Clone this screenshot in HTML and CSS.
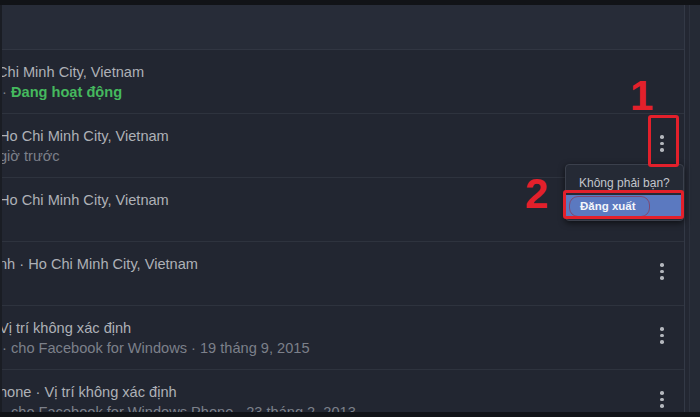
FILE: index.html
```html
<!DOCTYPE html>
<html lang="vi">
<head>
<meta charset="utf-8">
<title>Sessions</title>
<link rel="stylesheet" href="styles.css">
</head>
<body>
<div class="screen">
  <div class="topstrip"></div>
  <div class="frame">
    <div class="main">
      <div class="header"></div>
      <div class="row">
        <div class="info">
          <div class="primary cut3">Chi Minh City, Vietnam</div>
          <div class="secondary"><span class="dot">·</span><span class="active">Đang hoạt động</span></div>
        </div>
      </div>
      <div class="row">
        <div class="info">
          <div class="primary">Ho Chi Minh City, Vietnam</div>
          <div class="secondary">giờ trước</div>
        </div>
        <div class="kebab"><i></i><i></i><i></i></div>
      </div>
      <div class="row">
        <div class="info">
          <div class="primary">Ho Chi Minh City, Vietnam</div>
        </div>
        <div class="kebab"><i></i><i></i><i></i></div>
      </div>
      <div class="row">
        <div class="info">
          <div class="primary">nh · Ho Chi Minh City, Vietnam</div>
        </div>
        <div class="kebab"><i></i><i></i><i></i></div>
      </div>
      <div class="row">
        <div class="info">
          <div class="primary">Vị trí không xác định</div>
          <div class="secondary"><span class="dot">·</span>cho Facebook for Windows · 19 tháng 9, 2015</div>
        </div>
        <div class="kebab"><i></i><i></i><i></i></div>
      </div>
      <div class="row">
        <div class="info">
          <div class="primary">hone · Vị trí không xác định</div>
          <div class="secondary"><span class="dot">·</span>cho Facebook for Windows Phone · 23 tháng 2, 2013</div>
        </div>
        <div class="kebab"><i></i><i></i><i></i></div>
      </div>
    </div>
    <div class="gutter"></div>
  </div>
  <div class="bottomstrip"></div>

  <div class="menu">
    <div class="menu-item">Không phải bạn?</div>
    <div class="menu-item selected"><span class="pill">Đăng xuất</span></div>
  </div>
  <div class="mark box1"></div>
  <div class="mark box2"></div>
  <div class="num num1">1</div>
  <div class="num num2">2</div>
</div>
</body>
</html>
```

FILE: styles.css
```css
html, body {
  margin: 0;
  padding: 0;
  background: #14171d;
}
.screen {
  position: relative;
  width: 700px;
  height: 417px;
  overflow: hidden;
  display: flex;
  flex-direction: column;
  font-family: "Liberation Sans", Arial, sans-serif;
}
.topstrip {
  height: 5px;
  background: #111317;
  flex: none;
}
.bottomstrip {
  height: 5px;
  background: #111317;
  flex: none;
}
.frame {
  flex: 1;
  display: flex;
  min-height: 0;
  border-left: 2px solid #1a1d24;
}
.main {
  width: 682px;
  background: #222631;
  border-right: 1px solid #333946;
  overflow: hidden;
}
.gutter {
  flex: 1;
  background: #252a35;
  border-left: 4px solid #232732;
  box-shadow: inset 1px 0 0 #2d323e;
}
.header {
  height: 44px;
  background: #272c38;
  border-bottom: 1px solid #313642;
}
.row {
  height: 63px;
  border-bottom: 1px solid #2e333e;
  display: flex;
  align-items: flex-start;
  padding-right: 16px;
}
.info {
  flex: 1;
  padding-top: 12px;
  margin-left: -3px;
  white-space: nowrap;
}
.primary {
  font-size: 14.6px;
  line-height: 20px;
  color: #aeb1b7;
}
.cut3 {
  margin-left: -2px;
}
.secondary {
  font-size: 14.6px;
  line-height: 20px;
  color: #7c808a;
}
.dot {
  display: inline-block;
  width: 9px;
  padding-left: 3px;
}
.active {
  color: #45b95e;
  font-weight: bold;
}
.kebab {
  width: 12px;
  margin-top: 21px;
  display: flex;
  flex-direction: column;
  align-items: center;
  gap: 3px;
}
.kebab i {
  display: block;
  width: 3.5px;
  height: 3.5px;
  border-radius: 50%;
  background: #b4b7bd;
}
.menu {
  position: absolute;
  left: 565px;
  top: 164px;
  width: 119px;
  height: 57px;
  background: #252a35;
  border: 1px solid #3b404c;
  border-radius: 4px;
  box-shadow: 0 2px 6px rgba(0,0,0,0.6);
  box-sizing: border-box;
  padding-top: 8px;
}
.menu-item {
  height: 20px;
  font-size: 12px;
  line-height: 20px;
  color: #c3c6cc;
  padding-left: 13px;
}
.menu-item.selected {
  margin-top: 2px;
  height: 23px;
  line-height: 23px;
  background: #5b79c0;
  color: #f3f5fa;
  padding-left: 3px;
}
.pill {
  display: inline-block;
  padding: 0 13px 0 10px;
  line-height: 19px;
  border: 1px solid rgba(150, 40, 60, 0.6);
  border-radius: 9px;
  font-weight: bold;
  font-size: 11.5px;
}
.mark {
  position: absolute;
  border: 3px solid #e3202b;
  border-radius: 3px;
  box-sizing: border-box;
}
.box1 {
  left: 648px;
  top: 115px;
  width: 31px;
  height: 52px;
}
.box2 {
  left: 563px;
  top: 190px;
  width: 121px;
  height: 29px;
}
.num {
  position: absolute;
  color: #e3202b;
  font-weight: bold;
  font-size: 42px;
  line-height: 42px;
}
.num1 {
  left: 630px;
  top: 75px;
}
.num2 {
  left: 525px;
  top: 173px;
}
```
